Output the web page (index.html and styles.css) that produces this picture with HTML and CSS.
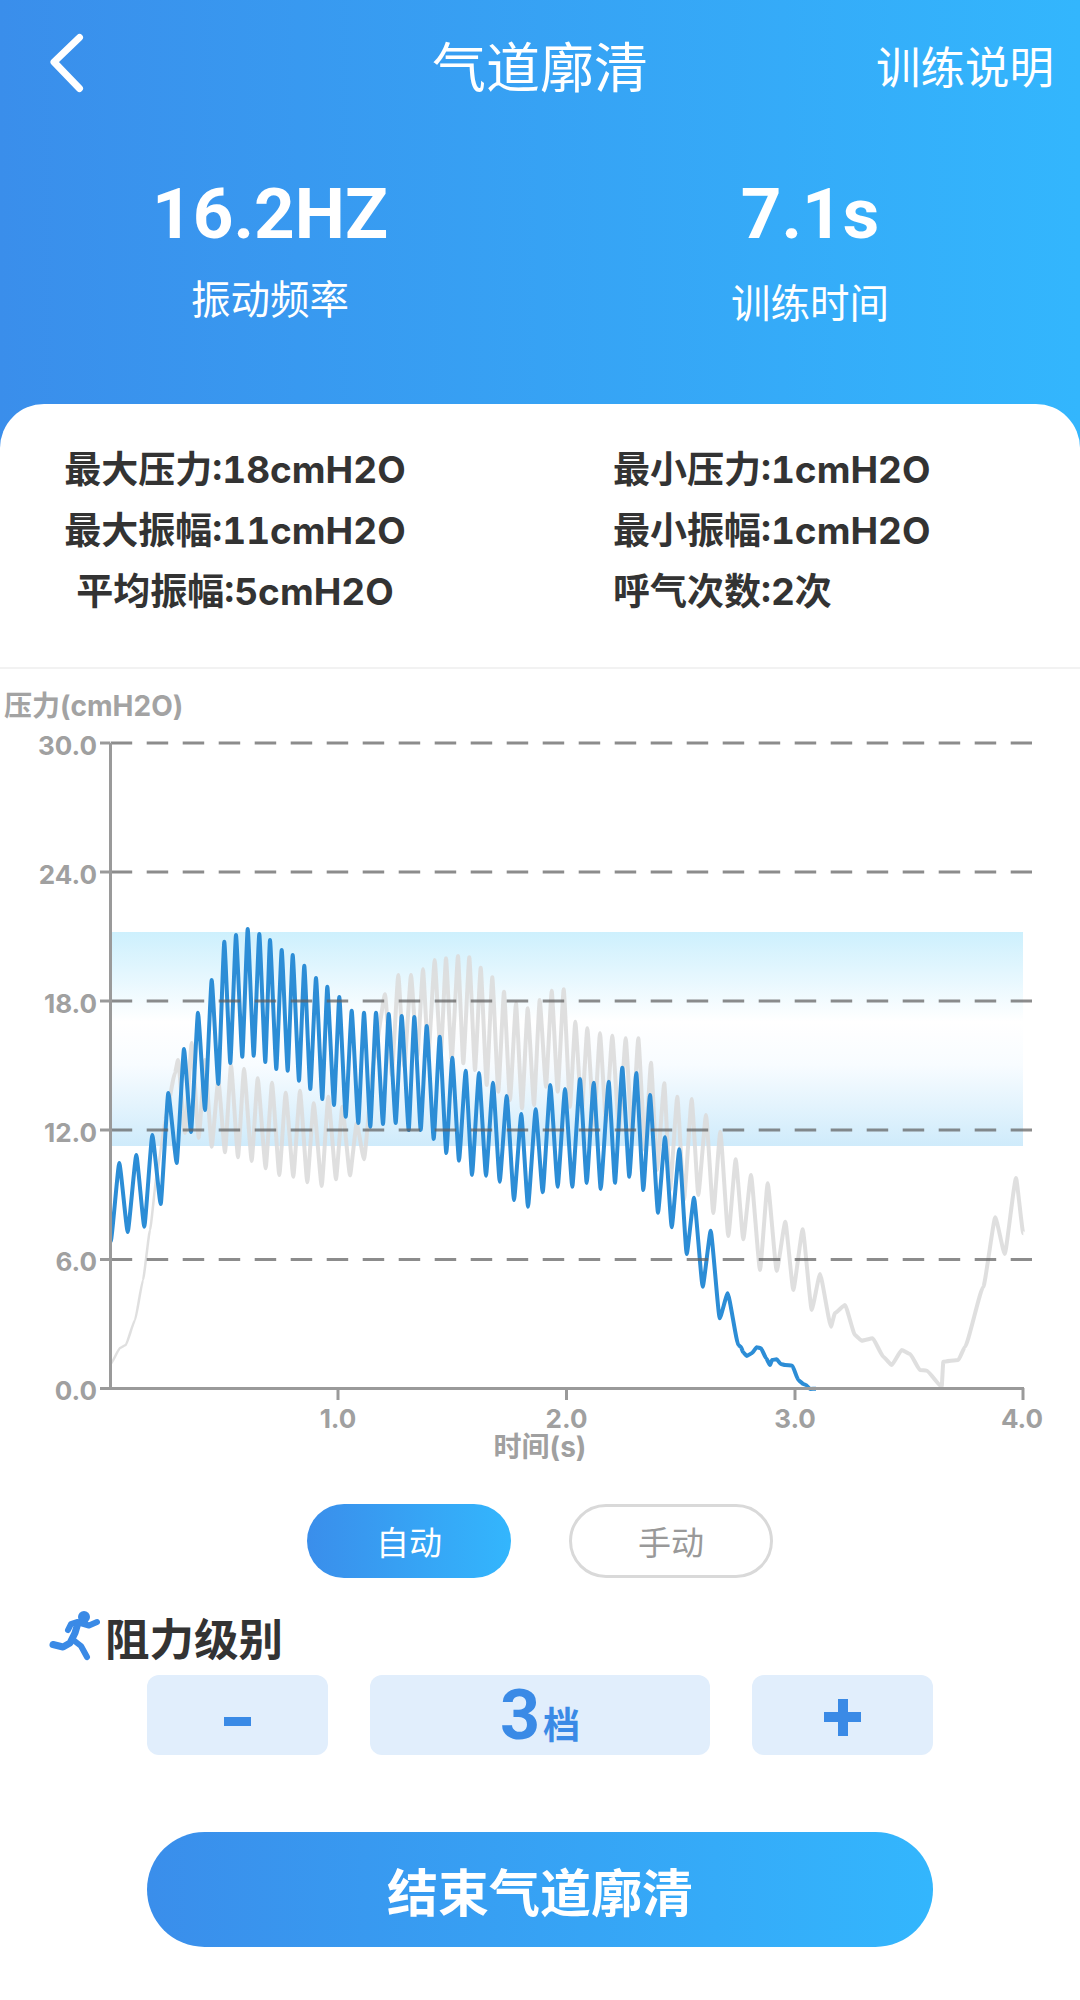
FILE: index.html
```html
<!DOCTYPE html>
<html lang="zh-CN">
<head>
  <meta charset="UTF-8">
  <meta name="viewport" content="width=device-width, initial-scale=1.0">
  <title>气道廓清</title>
  <link rel="stylesheet" href="styles.css">
</head>
<body>
  <header class="top">
    <nav class="nav">
      <svg class="back" width="44" height="66" viewBox="0 0 44 66">
        <path d="M36.5 5.5 L11 30 L36.5 56.5" />
      </svg>
      <h1 class="nav-title">气道廓清</h1>
      <span class="nav-help">训练说明</span>
    </nav>
    <div class="stats">
      <div class="stat stat-freq">
        <strong>16.2HZ</strong>
        <span>振动频率</span>
      </div>
      <div class="stat stat-time">
        <strong>7.1s</strong>
        <span>训练时间</span>
      </div>
    </div>
  </header>

  <main class="card">
    <section class="info">
      <div class="info-col info-left">
        <p>最大压力:18cmH2O</p>
        <p>最大振幅:11cmH2O</p>
        <p>平均振幅:5cmH2O</p>
      </div>
      <div class="info-col info-right">
        <p>最小压力:1cmH2O</p>
        <p>最小振幅:1cmH2O</p>
        <p>呼气次数:2次</p>
      </div>
    </section>

    <section class="chart">
      <svg width="1080" height="800" viewBox="0 669 1080 800">
        <defs>
          <linearGradient id="band" x1="0" y1="0" x2="0" y2="1">
            <stop offset="0" stop-color="#cdf0fd" />
            <stop offset="0.18" stop-color="#e2f6fe" />
            <stop offset="0.42" stop-color="#ffffff" />
            <stop offset="0.62" stop-color="#f8fcff" />
            <stop offset="1" stop-color="#cfebfb" />
          </linearGradient>
        </defs>
        <text class="axis-title" x="4" y="716">压力(cmH2O)</text>

        <rect x="110" y="932" width="913" height="214" fill="url(#band)" />

        <path class="wave line-old thin" data-points="110.7,1364 120,1348 125.7,1345 135,1320 143,1280 150,1230 157,1173 165,1120" />
        <path class="wave line-old" data-points="165,1120 175,1073 178,1060 185,1133 191.7,1043 198.7,1138 205,1060 211.7,1146.7 218.3,1080 225,1152.3 231,1065 238,1157.3 244,1069 251.7,1161 257.7,1078.3 265.7,1168.3 272,1082.7 279.3,1175 285.7,1092.7 293.3,1176.7 300,1090.7 307.3,1182.3 313.7,1103.3 321.7,1186 328.3,1096.7 336,1179.3 342.3,1106.7 350,1175.3 356.7,1123.3 364,1159.3 374,1060 385,994.3 391.7,1075 398.3,975 404.3,1066.7 411,975 417.3,1056.7 423,969.3 428.3,1056.7 434.7,960 440.7,1056.7 446,958.3 451.7,1060 458,956 463.3,1063.3 469.3,957.3 475,1070 480.7,967.7 486.7,1085 492.3,977.3 498.3,1091.7 504,991.7 510,1100 516,1003.3 522,1108.3 527.7,1008.3 534,1105 539.7,1000 546,1086.7 551.7,990.7 557.7,1091.7 563.7,989.3 570,1106.7 575.3,1021.7 581.7,1113.3 587.3,1028.3 594,1125 600,1033.3 606,1122 612.3,1035.7 619,1130 625.7,1038.3 632,1135 638.3,1038.3 645,1150 651,1062.7 657,1170 664.3,1083.3 670,1190 677.3,1096.7 684,1200 691.7,1099 698.3,1195 706,1115 713.3,1213 720.3,1131.7 728.3,1236 735.7,1159.3 743.3,1239.3 751,1175 760,1270 767.7,1183.3 776.7,1271 785.3,1221.7 793.3,1290 802.7,1229.3 811.7,1310 820,1274 831,1326.7 835,1313 845,1305 855,1335 861.7,1340.7 872.7,1338.3 883.3,1356.7 891.7,1365 901.7,1350 910,1354 920,1370 926.7,1370.7 941.7,1386.7 943.3,1361.7 958.3,1360 965,1346.7 983.3,1286.7 995.3,1217.3 1004.7,1254 1016,1178 1023.3,1233.3" />

        <path class="wave line-now" data-points="110.7,1241.7 119.3,1163 127.7,1232 136.3,1155 144.3,1226.7 152.3,1135 160.7,1204 168.3,1093 176.7,1163 184,1049 191,1132 198,1012.7 205,1110 211.7,980 218.3,1084 224.3,941.7 230.3,1063 236,935 242.3,1056.7 247.7,929 253.7,1055.7 259.3,934 265.3,1062 270,940 276.3,1069 281.7,950 287.7,1070.7 292.7,955 299,1080.7 304.3,965.7 310.3,1089 316,978 322.3,1099 327.3,986.7 334,1105 339.3,997 345.7,1116.7 351.7,1010.7 358.3,1123 364,1012.7 370.3,1126.7 376,1012.7 383,1124 388.7,1014 395.7,1123 401.7,1016 408.7,1130 414.3,1017 420.7,1130 426.7,1026 433.7,1139 439.7,1036.7 446.3,1153 452.3,1057.7 459,1160.7 465.7,1070.7 472,1175 479,1073 486,1175.7 493,1082.7 499.7,1181.7 506.7,1096 514,1200 521.3,1114 528,1206.7 535.7,1109.3 542.7,1192.3 550.3,1085 557.7,1186.7 565,1089 572.3,1186.7 580,1079 586.7,1183 593.7,1082.7 600.7,1189 608.7,1081.7 615,1182.7 622.3,1067.7 629.3,1176.7 636.3,1073 643.3,1190 650,1095 658,1212.7 665,1137.3 671.7,1227.3 679.3,1149.3 686.7,1254 694,1197.7 702.7,1286.7 710.7,1230.7 719.7,1318.3 727.7,1293.3 738.3,1345 741,1347 743,1352 746.7,1356 751.7,1353.3 756.7,1347.3 761,1348.3 766,1358 770,1365 772,1360 776.7,1359.3 780.7,1364 785,1365 792.3,1365.7 798.3,1380 803.3,1384 806,1385 810,1389 816,1388.7" />

        <g class="grid">
          <line x1="110.7" y1="743" x2="1032" y2="743" />
          <line x1="110.7" y1="872" x2="1032" y2="872" />
          <line x1="110.7" y1="1001" x2="1032" y2="1001" />
          <line x1="110.7" y1="1130" x2="1032" y2="1130" />
          <line x1="110.7" y1="1259.5" x2="1032" y2="1259.5" />
        </g>

        <g class="axis">
          <line x1="110.5" y1="743" x2="110.5" y2="1390" />
          <line x1="100" y1="1388.5" x2="1024" y2="1388.5" />
          <line x1="100" y1="743" x2="110" y2="743" />
          <line x1="100" y1="872" x2="110" y2="872" />
          <line x1="100" y1="1001" x2="110" y2="1001" />
          <line x1="100" y1="1130" x2="110" y2="1130" />
          <line x1="100" y1="1259.5" x2="110" y2="1259.5" />
          <line x1="338" y1="1388" x2="338" y2="1400" />
          <line x1="566.5" y1="1388" x2="566.5" y2="1400" />
          <line x1="795" y1="1388" x2="795" y2="1400" />
          <line x1="1023" y1="1388" x2="1023" y2="1400" />
        </g>

        <g class="tick-y">
          <text x="97" y="755">30.0</text>
          <text x="97" y="884">24.0</text>
          <text x="97" y="1013">18.0</text>
          <text x="97" y="1142">12.0</text>
          <text x="97" y="1271">6.0</text>
          <text x="97" y="1400">0.0</text>
        </g>
        <g class="tick-x">
          <text x="338" y="1428">1.0</text>
          <text x="566.5" y="1428">2.0</text>
          <text x="795" y="1428">3.0</text>
          <text x="1022" y="1428">4.0</text>
          <text class="axis-name" x="540" y="1457">时间(s)</text>
        </g>
      </svg>
    </section>

    <div class="modes">
      <button class="mode mode-on">自动</button>
      <button class="mode">手动</button>
    </div>

    <section class="level">
      <div class="level-head">
        <svg class="run-icon" width="54" height="54" viewBox="0 0 54 54">
          <circle cx="36" cy="7" r="6" class="run-head" />
          <path d="M49 12 L41 15.5 L29 12 L23 14 L20 20" />
          <path d="M30 13 L27 23 L22 33 L15 37 L5 34.5" class="run-body" />
          <path d="M24 29 L33 36 L39 47" />
        </svg>
        <h2>阻力级别</h2>
      </div>
      <div class="stepper">
        <button class="step" aria-label="减"><i class="minus"></i></button>
        <div class="step step-value"><b>3</b><small>档</small></div>
        <button class="step" aria-label="加"><i class="plus"></i></button>
      </div>
    </section>

    <button class="end-btn">结束气道廓清</button>
  </main>
  <script src="chart.js"></script>
</body>
</html>
```

FILE: styles.css
```css
* {
  box-sizing: border-box;
}
body {
  margin: 0;
  width: 1080px;
  background: #fff;
  font-family: "Noto Sans CJK SC", sans-serif;
  color: #333;
}
h1, h2, p {
  margin: 0;
}
button {
  font-family: inherit;
  border: 0;
  padding: 0;
}

/* header */
.top {
  height: 448px;
  padding-top: 32px;
  background: linear-gradient(90deg, #3a8eeb, #33b6fd);
  color: #fff;
}
.nav {
  display: grid;
  grid-template-columns: 1fr auto 1fr;
  align-items: center;
  height: 62px;
  padding: 0 26px;
}
.back {
  margin-left: 17px;
}
.back path {
  fill: none;
  stroke: #fff;
  stroke-width: 7;
  stroke-linecap: round;
  stroke-linejoin: round;
}
.nav-title {
  font-size: 54px;
  font-weight: 400;
  line-height: 62px;
}
.nav-help {
  font-size: 44.5px;
  line-height: 62px;
  justify-self: end;
}
.stats {
  display: flex;
  margin-top: 84px;
}
.stat {
  display: flex;
  flex-direction: column;
  align-items: center;
  width: 540px;
}
.stat strong {
  font-family: Roboto, sans-serif;
  font-size: 71px;
  font-weight: 700;
  line-height: 72px;
}
.stat span {
  font-size: 39.5px;
  line-height: 48px;
}
.stat-freq span {
  margin-top: 23px;
}
.stat-time span {
  margin-top: 27px;
}

/* white sheet */
.card {
  margin-top: -44px;
  background: #fff;
  border-radius: 44px 44px 0 0;
  padding-top: 35px;
}
.info {
  display: flex;
  height: 230px;
  border-bottom: 2px solid #f2f2f2;
}
.info-col p {
  font-size: 37px;
  font-weight: 700;
  line-height: 61px;
  font-family: Inter, "Noto Sans CJK SC", sans-serif;
  font-variant-numeric: tabular-nums;
}
.info-left {
  width: 470px;
  text-align: center;
}
.info-right {
  margin-left: 143px;
}

/* chart */
.chart svg {
  display: block;
}
.axis-title {
  font-family: Inter, "Noto Sans CJK SC", sans-serif;
  font-size: 28px;
  font-weight: 700;
  fill: #a3a3a3;
}
.wave {
  fill: none;
  stroke-linejoin: round;
}
.line-old {
  stroke: #dcdcdc;
  stroke-width: 4;
  stroke-opacity: 0.9;
}
.line-old.thin {
  stroke-width: 2.5;
}
.line-now {
  stroke: #2c8dd6;
  stroke-width: 4;
}
.grid line {
  stroke: #5f5f5f;
  stroke-opacity: 0.72;
  stroke-width: 3;
  stroke-dasharray: 21.5 14.5;
}
.axis line {
  stroke: #9a9a9a;
  stroke-width: 3;
}
.tick-y text,
.tick-x text {
  font-family: Inter, "Noto Sans CJK SC", sans-serif;
  font-size: 26px;
  font-weight: 700;
  fill: #a0a0a0;
}
.tick-y text {
  text-anchor: end;
}
.tick-x text {
  text-anchor: middle;
}
.tick-x .axis-name {
  font-size: 28px;
}

/* auto / manual */
.modes {
  display: flex;
  justify-content: center;
  gap: 58px;
  margin-top: 35px;
}
.mode {
  width: 204px;
  height: 74px;
  border-radius: 37px;
  background: #fff;
  border: 3px solid #d9d9d9;
  color: #999;
  font-size: 33px;
}
.mode-on {
  border: 0;
  background: linear-gradient(90deg, #3a8eeb, #33b6fd);
  color: #fff;
}

/* resistance level */
.level {
  margin-top: 32px;
}
.level-head {
  display: flex;
  align-items: center;
  padding-left: 48px;
  height: 54px;
}
.run-icon {
  flex: none;
}
.run-icon path {
  fill: none;
  stroke: #3a8ae6;
  stroke-width: 6;
  stroke-linecap: round;
  stroke-linejoin: round;
}
.run-icon .run-body {
  stroke-width: 7;
}
.run-head {
  fill: #3a8ae6;
}
.level-head h2 {
  font-size: 44.5px;
  font-weight: 700;
  line-height: 54px;
  margin-left: 3px;
}
.stepper {
  display: flex;
  justify-content: center;
  gap: 42px;
  margin-top: 11px;
}
.step {
  display: flex;
  align-items: center;
  justify-content: center;
  width: 181px;
  height: 80px;
  border-radius: 12px;
  background: #e1eefc;
}
.minus {
  display: block;
  width: 27px;
  height: 9px;
  margin-top: 13px;
  background: #3a8ae6;
}
.plus {
  display: block;
  width: 37px;
  height: 37px;
  margin-top: 4px;
  background:
    linear-gradient(#3a8ae6, #3a8ae6) center / 100% 10px no-repeat,
    linear-gradient(#3a8ae6, #3a8ae6) center / 10px 100% no-repeat;
}
.step-value {
  width: 340px;
  align-items: baseline;
  color: #3a8ae6;
}
.step-value b {
  font-family: Roboto, sans-serif;
  font-size: 70px;
  line-height: 80px;
  font-weight: 700;
}
.step-value small {
  font-size: 37px;
  font-weight: 700;
  margin-left: 3px;
}

/* end button */
.end-btn {
  display: block;
  width: 786px;
  height: 115px;
  margin: 77px auto 0;
  border-radius: 58px;
  background: linear-gradient(90deg, #3a8eeb, #33b6fd);
  color: #fff;
  font-size: 51px;
  font-weight: 700;
}
```

FILE: chart.js
```js
// turn the peak/trough lists into lightly rounded waves
document.querySelectorAll(".wave").forEach(function ($wave) {
  const pts = $wave.dataset.points.split(" ").map(function (p) {
    return p.split(",").map(Number);
  });
  let d = "M" + pts[0][0] + " " + pts[0][1];
  for (let i = 1; i < pts.length; i++) {
    const [x0, y0] = pts[i - 1];
    const [x1, y1] = pts[i];
    const k = (x1 - x0) * 0.14;
    d += " C" + (x0 + k) + " " + y0 + " " + (x1 - k) + " " + y1 + " " + x1 + " " + y1;
  }
  $wave.setAttribute("d", d);
});
```
